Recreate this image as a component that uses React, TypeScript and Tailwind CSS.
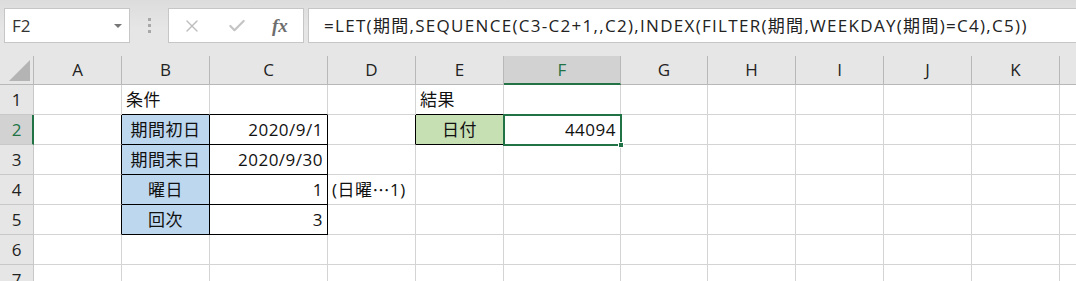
import { X, Check } from "lucide-react";

type Cell = { text?: React.ReactNode; align?: "left" | "center" | "right"; bg?: string; br?: string; bb?: string };

const cols = [
  { name: "A", w: "w-[88px]" },
  { name: "B", w: "w-[88px]" },
  { name: "C", w: "w-[118px]" },
  { name: "D", w: "w-[88px]" },
  { name: "E", w: "w-[88px]" },
  { name: "F", w: "w-[117px]" },
  { name: "G", w: "w-[87px]" },
  { name: "H", w: "w-[88px]" },
  { name: "I", w: "w-[88px]" },
  { name: "J", w: "w-[88px]" },
  { name: "K", w: "w-[88px]" },
];

const black = "border-black";
const cjk = { fontFamily: '"Noto Sans CJK JP", sans-serif' };

// cell map: row -> col index -> cell
const data: Record<number, Record<number, Cell>> = {
  1: {
    1: { text: "条件", align: "left", bb: black },
    2: { bb: black },
    4: { text: "結果", align: "left", bb: black },
    5: { bb: black },
  },
  2: {
    0: { br: black },
    1: { text: "期間初日", align: "center", bg: "bg-[#bdd7ee]", br: black, bb: black },
    2: { text: "2020/9/1", align: "right", br: black, bb: black },
    3: { br: black },
    4: { text: "日付", align: "center", bg: "bg-[#c6e0b4]", br: black, bb: black },
    5: { text: "44094", align: "right", br: black, bb: black },
  },
  3: {
    0: { br: black },
    1: { text: "期間末日", align: "center", bg: "bg-[#bdd7ee]", br: black, bb: black },
    2: { text: "2020/9/30", align: "right", br: black, bb: black },
  },
  4: {
    0: { br: black },
    1: { text: "曜日", align: "center", bg: "bg-[#bdd7ee]", br: black, bb: black },
    2: { text: "1", align: "right", br: black, bb: black },
    3: {
      text: (
        <>
          (日曜<span style={cjk}>…</span>1)
        </>
      ),
      align: "left",
    },
  },
  5: {
    0: { br: black },
    1: { text: "回次", align: "center", bg: "bg-[#bdd7ee]", br: black, bb: black },
    2: { text: "3", align: "right", br: black, bb: black },
  },
};

const font = { fontFamily: '"Open Sans", "Noto Sans CJK JP", sans-serif' };

function FormulaBar() {
  return (
    <div className="h-[56px] flex items-start pt-[8px] bg-gradient-to-b from-[#dcdcdc] via-[#e6e6e6] to-[#e6e6e6]">
      <div className="ml-[4px] w-[126px] h-[35px] bg-white border border-[#c6c6c6] flex items-center pl-[7px] pr-[7px]">
        <span className="text-[17px] text-[#333] flex-1">F2</span>
        <span className="w-0 h-0 border-l-[4px] border-r-[4px] border-t-[4px] border-l-transparent border-r-transparent border-t-[#777]" />
      </div>
      <div className="w-[38px] h-[35px] flex flex-col items-center justify-center gap-[3px]">
        <span className="w-[3px] h-[3px] bg-[#a8a8a8]" />
        <span className="w-[3px] h-[3px] bg-[#a8a8a8]" />
        <span className="w-[3px] h-[3px] bg-[#a8a8a8]" />
      </div>
      <div className="w-[136px] h-[35px] bg-white border border-[#c6c6c6] flex items-center">
        <X size={20} strokeWidth={1.6} className="ml-[13px] text-[#bdbdbd]" />
        <Check size={20} strokeWidth={2.6} className="ml-[25px] text-[#c4c4c4]" />
        <span
          className="ml-[25px] text-[19px] italic font-bold text-[#6e6e6e] leading-none"
          style={{ fontFamily: '"Liberation Serif", "DejaVu Serif", serif' }}
        >
          fx
        </span>
      </div>
      <div className="ml-[4px] flex-1 h-[35px] bg-white border-y border-l border-[#c6c6c6] flex items-center pl-[15px]">
        <span className="text-[17px] text-[#222] whitespace-nowrap tracking-[1.3px]">
          =LET(期間,SEQUENCE(C3-C2+1,,C2),INDEX(FILTER(期間,WEEKDAY(期間)=C4),C5))
        </span>
      </div>
    </div>
  );
}

function HeaderRow() {
  return (
    <div className="flex h-[29px] bg-[#e6e6e6]">
      <div className="w-[34px] shrink-0 border-r border-b border-[#b8b8b8] relative">
        <span className="absolute right-[3px] bottom-[3px] w-0 h-0 border-l-[21px] border-b-[21px] border-l-transparent border-b-[#b4b4b4]" />
      </div>
      {cols.map((c) =>
        c.name === "F" ? (
          <div
            key={c.name}
            className={`${c.w} shrink-0 bg-[#d2d2d2] border-r border-[#b8b8b8] border-b-2 border-b-[#217346] flex items-center justify-center text-[17px] text-[#217346] pt-[1px]`}
          >
            {c.name}
          </div>
        ) : (
          <div
            key={c.name}
            className={`${c.w} shrink-0 border-r border-b border-[#b8b8b8] flex items-center justify-center text-[17px] text-[#222]`}
          >
            {c.name}
          </div>
        )
      )}
      <div className="flex-1 border-b border-[#b8b8b8]" />
    </div>
  );
}

function GridRow({ n }: { n: number }) {
  const row = data[n] || {};
  const selected = n === 2;
  return (
    <div className="flex h-[30px]">
      <div
        className={
          selected
            ? "w-[34px] shrink-0 bg-[#d2d2d2] border-r-2 border-r-[#217346] border-b border-b-[#c8c8c8] flex items-center justify-center text-[17px] text-[#217346] pl-[1px]"
            : "w-[34px] shrink-0 bg-[#e6e6e6] border-r border-b border-[#c8c8c8] flex items-center justify-center text-[17px] text-[#222]"
        }
      >
        {n}
      </div>
      {cols.map((c, i) => {
        const cell = row[i] || {};
        const justify =
          cell.align === "center" ? "justify-center" : cell.align === "right" ? "justify-end pr-[4px]" : "justify-start pl-[4px]";
        return (
          <div
            key={c.name}
            className={`${c.w} shrink-0 border-r border-b border-[#d4d4d4] ${cell.br ? "border-r-black" : ""} ${cell.bb ? "border-b-black" : ""} ${cell.bg || "bg-white"} flex items-center ${justify} text-[17px] text-[#111] whitespace-nowrap tracking-[0.5px]`}
          >
            {cell.text}
          </div>
        );
      })}
      <div className="flex-1 border-b border-[#d4d4d4] bg-white" />
    </div>
  );
}

export default function App() {
  return (
    <div className="w-[1076px] h-[281px] overflow-hidden bg-white relative" style={font}>
      <FormulaBar />
      <HeaderRow />
      {[1, 2, 3, 4, 5, 6, 7].map((n) => (
        <GridRow key={n} n={n} />
      ))}
      {/* active cell outline */}
      <div className="absolute left-[503px] top-[114px] w-[119px] h-[32px] border-2 border-[#217346] pointer-events-none">
        <span className="absolute -right-[4px] -bottom-[4px] w-[6px] h-[6px] bg-[#217346] border border-white" />
      </div>
    </div>
  );
}
